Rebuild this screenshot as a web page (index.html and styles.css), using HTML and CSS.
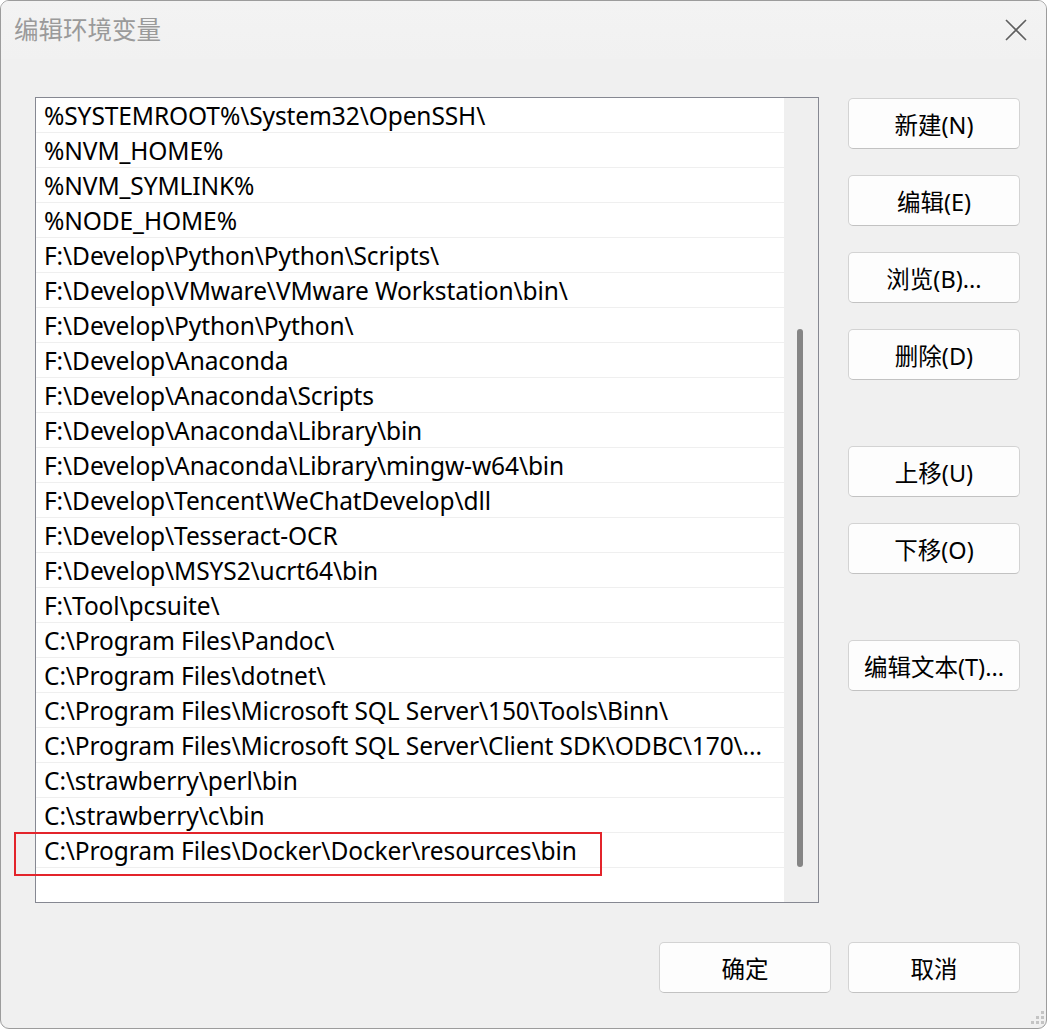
FILE: index.html
```html
<!DOCTYPE html>
<html>
<head>
    <meta charset="UTF-8">
    <title>编辑环境变量</title>
    <link rel="stylesheet" href="styles.css">
</head>
<body>
    <div class="window">
        <div class="titlebar">
            <span class="title">编辑环境变量</span>
            <svg class="close" width="22" height="22" viewBox="0 0 22 22">
                <path d="M1 1 L21 21 M21 1 L1 21" stroke="#5f5f5f" stroke-width="1.6" fill="none"/>
            </svg>
        </div>

        <div class="content">
            <div class="listbox">
                <ul class="rows">
                    <li>%SYSTEMROOT%\System32\OpenSSH\</li>
                    <li>%NVM_HOME%</li>
                    <li>%NVM_SYMLINK%</li>
                    <li>%NODE_HOME%</li>
                    <li>F:\Develop\Python\Python\Scripts\</li>
                    <li>F:\Develop\VMware\VMware Workstation\bin\</li>
                    <li>F:\Develop\Python\Python\</li>
                    <li>F:\Develop\Anaconda</li>
                    <li>F:\Develop\Anaconda\Scripts</li>
                    <li>F:\Develop\Anaconda\Library\bin</li>
                    <li>F:\Develop\Anaconda\Library\mingw-w64\bin</li>
                    <li>F:\Develop\Tencent\WeChatDevelop\dll</li>
                    <li>F:\Develop\Tesseract-OCR</li>
                    <li>F:\Develop\MSYS2\ucrt64\bin</li>
                    <li>F:\Tool\pcsuite\</li>
                    <li>C:\Program Files\Pandoc\</li>
                    <li>C:\Program Files\dotnet\</li>
                    <li>C:\Program Files\Microsoft SQL Server\150\Tools\Binn\</li>
                    <li>C:\Program Files\Microsoft SQL Server\Client SDK\ODBC\170\...</li>
                    <li>C:\strawberry\perl\bin</li>
                    <li>C:\strawberry\c\bin</li>
                    <li class="marked">C:\Program Files\Docker\Docker\resources\bin</li>
                    <li class="empty"></li>
                </ul>
                <div class="scrollbar">
                    <div class="thumb"></div>
                </div>
            </div>

            <div class="side">
                <button type="button" class="gap-s">新建(N)</button>
                <button type="button" class="gap-s">编辑(E)</button>
                <button type="button" class="gap-s">浏览(B)...</button>
                <button type="button" class="gap-l">删除(D)</button>
                <button type="button" class="gap-s">上移(U)</button>
                <button type="button" class="gap-l">下移(O)</button>
                <button type="button">编辑文本(T)...</button>
            </div>
        </div>

        <div class="footer">
            <button type="button">确定</button>
            <button type="button">取消</button>
        </div>

        <svg class="grip" width="16" height="16" viewBox="0 0 16 16">
            <rect x="12" y="1" width="3" height="3" fill="#c4c4c4"/>
            <rect x="7" y="6" width="3" height="3" fill="#c4c4c4"/>
            <rect x="12" y="6" width="3" height="3" fill="#c4c4c4"/>
            <rect x="2" y="11" width="3" height="3" fill="#c4c4c4"/>
            <rect x="7" y="11" width="3" height="3" fill="#c4c4c4"/>
            <rect x="12" y="11" width="3" height="3" fill="#c4c4c4"/>
        </svg>
    </div>
</body>
</html>
```

FILE: styles.css
```css
* {
    margin: 0;
    padding: 0;
    box-sizing: border-box;
}

body {
    background: #ffffff;
    font-family: "Noto Sans", "Noto Sans CJK SC", sans-serif;
    color: #000;
}

.window {
    width: 1047px;
    height: 1029px;
    border: 1px solid #9c9c9c;
    border-radius: 9px;
    background: #f0f0f0;
    position: relative;
    overflow: hidden;
}

.titlebar {
    height: 58px;
    display: flex;
    align-items: center;
    justify-content: space-between;
    padding: 0 19px 0 13px;
    background: linear-gradient(#f3f3f3, #f1f1f1);
}
.title {
    font-family: "Noto Sans CJK SC", sans-serif;
    font-size: 24.5px;
    color: #9a9a9a;
    margin-top: -3px;
}
.close {
    margin-top: -1px;
}

.content {
    display: flex;
    align-items: flex-start;
    padding: 38px 26px 0 34px;
    gap: 29px;
}

/* list of paths */
.listbox {
    width: 784px;
    height: 806px;
    border: 1px solid #868892;
    background: #fff;
    display: flex;
}
.rows {
    list-style: none;
    flex: 1;
    min-width: 0;
}
.rows li {
    height: 35px;
    border-bottom: 1px solid #efefef;
    padding-left: 8px;
    font-size: 24.5px;
    line-height: 36px;
    white-space: nowrap;
    letter-spacing: -0.1px;
    position: relative;
}
.rows li.empty {
    border-bottom: none;
}
.rows li.marked::before {
    content: '';
    position: absolute;
    left: -22px;
    top: -1px;
    width: 584px;
    height: 40px;
    border: 2px solid #e3242b;
}
.scrollbar {
    width: 34px;
    background: #efefef;
    position: relative;
}
.thumb {
    position: absolute;
    left: 13px;
    top: 231px;
    width: 6px;
    height: 538px;
    border-radius: 3px;
    background: #858585;
}

/* buttons */
button {
    width: 172px;
    height: 51px;
    border: 1px solid #d3d3d3;
    border-bottom-color: #c2c2c2;
    border-radius: 5px;
    background: #fdfdfd;
    font-family: "Noto Sans", "Noto Sans CJK SC", sans-serif;
    font-size: 23.5px;
    color: #000;
}
.side {
    display: flex;
    flex-direction: column;
    padding-top: 1px;
}
.side .gap-s {
    margin-bottom: 26px;
}
.side .gap-l {
    margin-bottom: 66px;
}

.footer {
    display: flex;
    justify-content: flex-end;
    gap: 17px;
    padding: 39px 26px 0 0;
}

.grip {
    position: absolute;
    right: 1px;
    bottom: 2px;
}
```
